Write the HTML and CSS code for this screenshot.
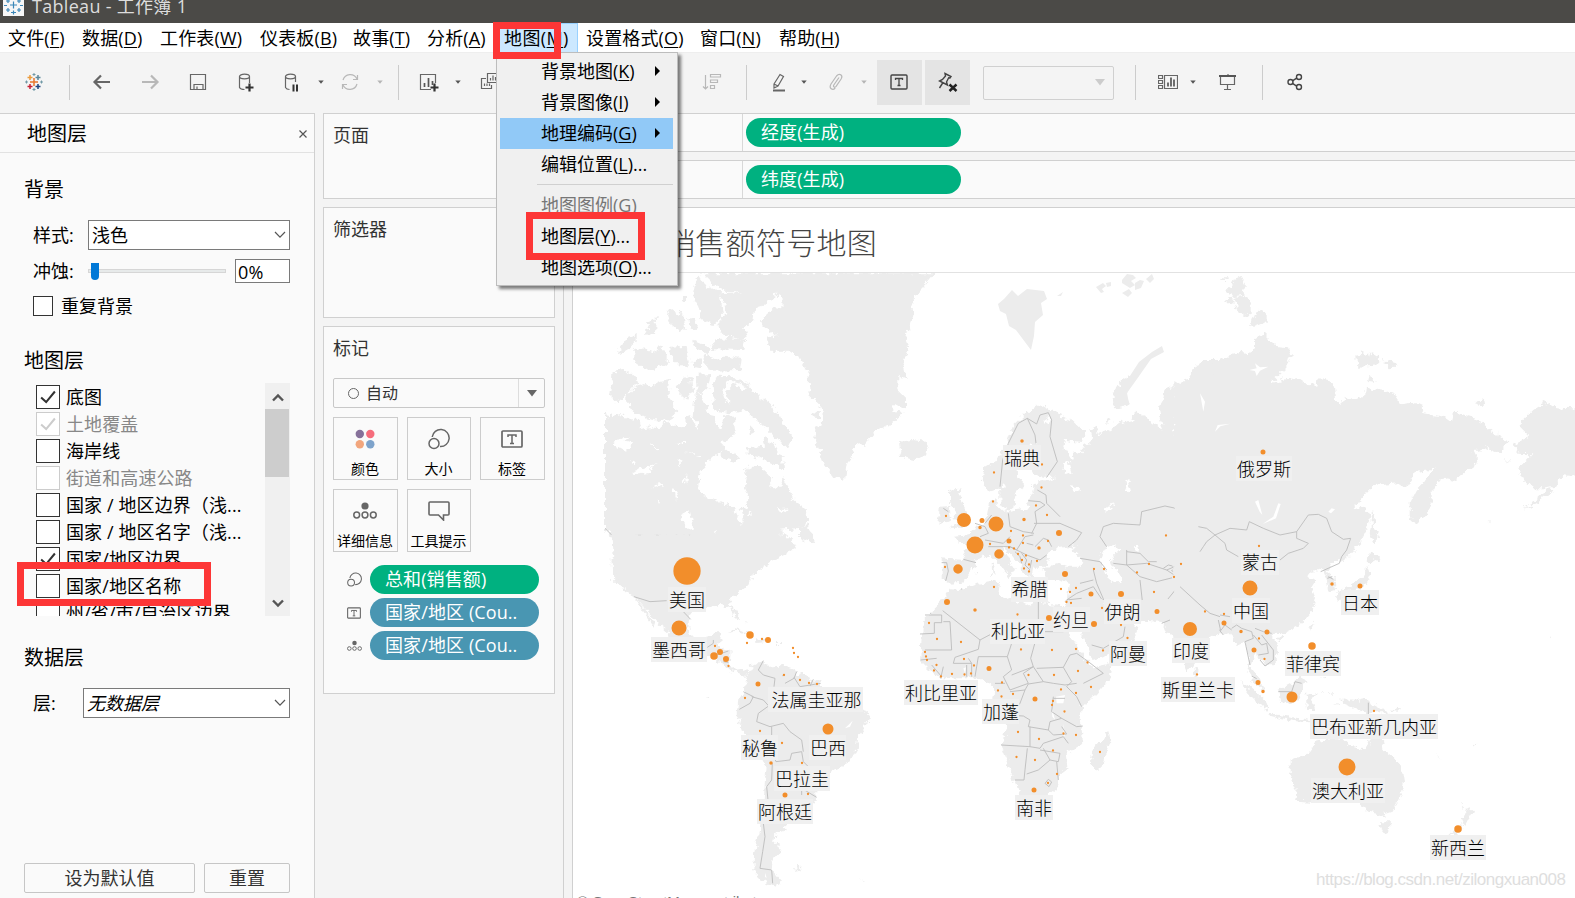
FILE: index.html
```html
<!DOCTYPE html>
<html lang="zh-CN">
<head>
<meta charset="utf-8">
<title>Tableau - 工作簿 1</title>
<link rel="stylesheet" href="styles.css">
</head>
<body>
<svg class="defs" width="0" height="0">
  <defs>
    <symbol id="caret" viewBox="0 0 6 4"><path d="M0.3 0.5h5.4L3 3.8z"/></symbol>
    <symbol id="chev" viewBox="0 0 12 8"><path d="M1 1l5 5.2L11 1" fill="none" stroke="#555" stroke-width="1.2"/></symbol>
    <symbol id="size" viewBox="0 0 22 22"><g fill="none" stroke="#666" stroke-width="1.5"><path d="M4.2 9A8.5 8.5 0 1 1 12 18.5"/><circle cx="6" cy="15.5" r="5"/></g></symbol>
    <symbol id="label" viewBox="0 0 22 18"><rect x="1" y="1" width="20" height="16" rx="1" fill="none" stroke="#666" stroke-width="1.7"/><path d="M7 7V5h8v2M11 5v8.5M9 13.5h4" fill="none" stroke="#666" stroke-width="1.5"/></symbol>
    <symbol id="detail" viewBox="0 0 24 18"><circle cx="12" cy="4" r="3.6" fill="#666"/><g fill="none" stroke="#666" stroke-width="1.5"><circle cx="3.7" cy="13" r="2.9"/><circle cx="12" cy="13" r="2.9"/><circle cx="20.3" cy="13" r="2.9"/></g></symbol>
    <symbol id="tick" viewBox="0 0 24 24"><path d="M4.5 12.5l5.5 5L19.5 6" fill="none" stroke-width="2.2"/></symbol>
    <filter id="coast" x="-2%" y="-2%" width="104%" height="104%" color-interpolation-filters="sRGB">
      <feTurbulence type="fractalNoise" baseFrequency=".055" numOctaves="3" seed="4" result="n"/>
      <feDisplacementMap in="SourceGraphic" in2="n" scale="26" xChannelSelector="R" yChannelSelector="G"/>
    </filter>
  </defs>
</svg>
<div class="app">
  <header class="titlebar">
    <svg class="app-icon" width="21" height="16" viewBox="0 0 21 16"><rect width="21" height="16" fill="#f7f7f7"/><path d="M7 5h7M10.5 1.5v7M3 1h4M5 0v3M14 1h4M16 0v3M3 10h4M5 8v4M14 10h4M16 8v4M8 12.5h5M10.5 10.5v4M1 5.500h3M17 5.500h3" stroke="#3b87b8" stroke-width="1.200"/></svg>
    <span>Tableau - 工作簿 1</span>
  </header>
  <nav class="menubar">
    <span>文件(<u>F</u>)</span><span>数据(<u>D</u>)</span><span>工作表(<u>W</u>)</span><span>仪表板(<u>B</u>)</span><span>故事(<u>T</u>)</span><span>分析(<u>A</u>)</span><span class="open">地图(<u>M</u>)</span><span>设置格式(<u>O</u>)</span><span>窗口(<u>N</u>)</span><span>帮助(<u>H</u>)</span>
  </nav>
  <div class="toolbar">
    <svg width="20" height="20" viewBox="0 0 20 20" stroke-width="1.5"><path d="M10 6v8M6 10h8" stroke="#e8762c"/><path d="M3.500 5.500h5M6 3v5" stroke="#eb9b3c"/><path d="M11.500 5.500h5M14 3v5" stroke="#5b879b"/><path d="M3.500 14.500h5M6 12v5" stroke="#c72035"/><path d="M11.500 14.500h5M14 12v5" stroke="#1f457e"/><path d="M8.500 2.500h3M10 1v3M8.500 17.500h3M10 16v3M1 10h3M2.500 8.500v3M16 10h3M17.500 8.500v3" stroke="#7099a6" stroke-width="1"/></svg>
    <i class="sep"></i>
    <svg width="20" height="20" viewBox="0 0 20 20"><path d="M18 10H3M9 3.500L2.500 10 9 16.500" class="ln b"/></svg>
    <svg width="20" height="20" viewBox="0 0 20 20"><path d="M2 10h15M11 3.500l6.500 6.500-6.500 6.500" class="ln b off"/></svg>
    <svg width="20" height="20" viewBox="0 0 20 20"><path d="M2.500 2.500h15v15h-15zM6 17.500v-5h9v5M9 17.500V14.500" class="ln"/></svg>
    <svg width="20" height="20" viewBox="0 0 20 20"><path d="M3.500 4.500v11q1 2 5 2M13.500 4.500V11" class="ln"/><ellipse cx="8.500" cy="4.500" rx="5" ry="2.300" class="ln"/><path d="M13.500 11.500v8M9.500 15.500h8" stroke="#333" stroke-width="2.200"/></svg>
    <svg width="20" height="20" viewBox="0 0 20 20"><path d="M3.500 4.500v11q1 2 4 2M13.500 4.500V10" class="ln"/><ellipse cx="8.500" cy="4.500" rx="5" ry="2.300" class="ln"/><path d="M11.500 12.500v7M15 12.500v7" stroke="#333" stroke-width="2"/></svg>
    <svg class="caret" width="6" height="4"><use href="#caret"/></svg>
    <svg width="20" height="20" viewBox="0 0 20 20"><path d="M3 8a7.500 7.500 0 0 1 14-1M17.500 3v4.500H13M17 12a7.500 7.500 0 0 1-14 1M2.500 17v-4.500H7" class="ln off"/></svg>
    <svg class="caret off" width="6" height="4"><use href="#caret"/></svg>
    <i class="sep"></i>
    <svg width="20" height="20" viewBox="0 0 20 20"><path d="M12 17.500H1.500v-15h15V11" class="ln"/><path d="M5.500 15v-4M9.500 15V6M13.500 13V9" stroke="#555" stroke-width="1.700"/><path d="M15.500 11.500v8M11.500 15.500h8" stroke="#333" stroke-width="2.200"/></svg>
    <svg class="caret" width="6" height="4"><use href="#caret"/></svg>
    <svg width="20" height="20" viewBox="0 0 20 20"><path d="M8.500 1.500h11v9h-11zM7 6.500H2.500v10h10V13M5.500 14v-2.500M8 14v-2.500M10.500 14v-2.500M11.500 8.500V6M14 8.500v-5M16.500 8.500V5" class="ln"/></svg>
    <svg width="20" height="20" viewBox="0 0 20 20"><path d="M3.500 3v14M1 14.500l2.500 2.500L6 14.500M8.500 2.500h10v2.500h-10zM8.500 8h7v2.500h-7zM8.500 13.500h4v3h-4z" class="ln off"/></svg>
    <i class="sep"></i>
    <svg width="20" height="20" viewBox="0 0 20 20"><path d="M5 12L11 2.500l3.500 2L9 14l-4 2zM5 12l4 2" class="ln"/><path d="M4 18.500h12" stroke="#666" stroke-width="2"/></svg>
    <svg class="caret" width="6" height="4"><use href="#caret"/></svg>
    <svg width="20" height="20" viewBox="0 0 20 20"><path d="M13 5.500L7.800 13q-.8 1.500.3 2t2-.6l5-7.400q1.700-2.800-.3-4.200T10.500 4L5 12q-1.800 3.200.2 4.800t4-.8" class="ln off"/></svg>
    <svg class="caret off" width="6" height="4"><use href="#caret"/></svg>
    <span class="tool-on"><svg class="t" width="18" height="16" viewBox="0 0 18 16"><rect x="1" y="1" width="16" height="14" rx="1" fill="none" stroke="#444" stroke-width="1.400"/><path d="M5.500 6V4.500h7V6M9 4.500v7M7.500 11.500h3" fill="none" stroke="#444" stroke-width="1.300"/></svg></span>
    <span class="tool-on"><svg width="20" height="20" viewBox="0 0 20 20"><path d="M7 1.500l6 3-1 1.500-1.300-.2L8.500 10l1 3-8-4 3-1.500L7.500 4zM5 10.500L1.500 16" class="ln dark"/><path d="M11.500 12.500l7 6.500M18.500 12.500L11.500 19" stroke="#222" stroke-width="2.400"/></svg></span>
    <span class="fit"><svg width="10" height="7" viewBox="0 0 10 7"><path d="M0 0h10L5 6.500z" fill="#ccc"/></svg></span>
    <i class="sep"></i>
    <svg width="20" height="20" viewBox="0 0 20 20"><path d="M.5 3.500h4v3h-4zM.5 8.500h4v3h-4zM.5 13.500h4v3h-4zM6.500 3.500h13v13h-13z" class="ln"/><path d="M10 14.500v-4M13 14.500v-9M16 14.500v-7" stroke="#555" stroke-width="1.700"/></svg>
    <svg class="caret" width="6" height="4"><use href="#caret"/></svg>
    <svg width="20" height="20" viewBox="0 0 20 20"><path d="M10 2v2M2.500 4v8.500h14V4M9.500 13v4.500M6 17.500h7" class="ln"/><path d="M1 4h17" stroke="#555" stroke-width="2"/></svg>
    <i class="sep"></i>
    <svg width="20" height="20" viewBox="0 0 20 20"><path d="M7.500 8.800l4.500-3M7.500 11.300l4.500 3" class="ln dark"/><g class="ln dark"><circle cx="5.500" cy="10" r="2.500"/><circle cx="14" cy="5" r="2.500"/><circle cx="14" cy="15" r="2.500"/></g></svg>
  </div>

  <main class="work">
    <aside class="side">
      <div class="side-head"><span>地图层</span><svg width="8" height="8" viewBox="0 0 8 8"><path d="M.5 .5l7 7M7.500 .5l-7 7" stroke="#555" stroke-width="1.200"/></svg></div>
      <h2 class="h-bg">背景</h2>
      <div class="row style-row"><label>样式:</label><div class="select">浅色<svg width="12" height="8"><use href="#chev"/></svg></div></div>
      <div class="row wash-row"><label>冲蚀:</label><div class="track"><i class="thumb"></i></div><div class="pct">0%</div></div>
      <div class="row repeat"><i class="box small"></i>重复背景</div>
      <h2 class="h-layers">地图层</h2>
      <div class="layers">
        <ul>
          <li><i class="box"><svg width="22" height="22"><use href="#tick"/></svg></i>底图</li>
          <li class="dim"><i class="box"><svg width="22" height="22"><use href="#tick"/></svg></i>土地覆盖</li>
          <li><i class="box"></i>海岸线</li>
          <li class="dim"><i class="box"></i>街道和高速公路</li>
          <li><i class="box"></i>国家 / 地区边界（浅...</li>
          <li><i class="box"></i>国家 / 地区名字（浅...</li>
          <li><i class="box"><svg width="22" height="22"><use href="#tick"/></svg></i>国家/地区边界</li>
          <li><i class="box"></i>国家/地区名称</li>
          <li><i class="box"></i>州/省/市/自治区边界</li>
        </ul>
        <div class="scroll"><svg width="12" height="9" viewBox="0 0 12 9"><path d="M1 7.500l5-5 5 5" class="arr"/></svg><i class="bar"></i><svg width="12" height="9" viewBox="0 0 12 9"><path d="M1 1.500l5 5 5-5" class="arr"/></svg></div>
      </div>
      <h2 class="h-data">数据层</h2>
      <div class="row data-row"><label>层:</label><div class="select"><em>无数据层</em><svg width="12" height="8"><use href="#chev"/></svg></div></div>
      <div class="buttons"><button>设为默认值</button><button>重置</button></div>
    </aside>

    <section class="cards">
      <div class="card pages">页面</div>
      <div class="card filters">筛选器</div>
      <div class="card marks">标记
        <div class="mark-type"><i class="ring"></i><span>自动</span><b><svg width="10" height="7" viewBox="0 0 10 7"><path d="M0 0h10L5 6.500z" fill="#666"/></svg></b></div>
        <div class="mark-grid">
          <div><svg width="20" height="20" viewBox="0 0 20 20"><circle cx="4.800" cy="5" r="4.200" fill="#86719a"/><circle cx="15.300" cy="5" r="4.200" fill="#f66d7c"/><circle cx="4.800" cy="15.200" r="4.200" fill="#f2a67d"/><circle cx="15.300" cy="15.200" r="4.200" fill="#7ea3cb"/></svg>颜色</div>
          <div><svg width="22" height="22"><use href="#size"/></svg>大小</div>
          <div><svg width="22" height="18"><use href="#label"/></svg>标签</div>
          <div><svg width="24" height="18"><use href="#detail"/></svg>详细信息</div>
          <div><svg width="22" height="20" viewBox="0 0 22 20"><path d="M2 1h18q1 0 1 1v11q0 1-1 1h-4.500v5l-5-5H2q-1 0-1-1V2q0-1 1-1z" fill="none" stroke="#666" stroke-width="1.600"/></svg>工具提示</div>
        </div>
        <div class="mark-pills">
          <svg width="15" height="15"><use href="#size"/></svg><span class="pill green">总和(销售额)</span>
          <svg width="14" height="12"><use href="#label"/></svg><span class="pill blue">国家/地区 (Cou..</span>
          <svg width="15" height="12"><use href="#detail"/></svg><span class="pill blue">国家/地区 (Cou..</span>
        </div>
      </div>
    </section>

    <section class="view">
      <div class="shelf"><span class="shelf-name"></span><span class="pill green">经度(生成)</span></div>
      <div class="shelf"><span class="shelf-name"></span><span class="pill green">纬度(生成)</span></div>
      <div class="sheet">
        <h1>销售额符号地图</h1>
        <svg class="map" width="1002" height="625" viewBox="573 273 1002 625">
          <!-- North America, Greenland, Arctic islands -->
          <g transform="translate(570 270) scale(.33333)">
            <g class="land" filter="url(#coast)">
              <path d="M105 420L112 440 120 425 128 442 150 432 175 445 200 450 215 465 208 478 240 472 270 475 290 455 315 470 345 468 348 440 360 435 380 480 385 460 368 440 372 385 390 372 405 400 415 430 432 440 440 470 455 478 460 440 475 432 495 445 498 485 480 510 458 515 458 540 430 560 405 585 388 610 385 650 405 678 440 690 470 705 490 712 495 740 513 762 520 740 512 715 530 710 538 680 525 655 530 625 525 600 545 590 570 592 590 610 600 620 605 650 620 658 630 645 640 625 655 650 670 690 700 715 717 740 717 755 700 765 680 778 630 782 610 800 600 820 625 800 650 792 640 815 650 830 680 830 650 850 625 858 600 875 580 890 560 900 530 940 130 940 128 870 135 830 128 800 105 780z"/>
              <path d="M570 155L588 135 610 115 637 118 638 85 615 72 645 30 670 10 1095 10 1060 50 1050 60 1025 90 1030 130 1020 180 1005 190 1015 240 1000 280 1010 330 985 320 985 360 1005 380 1005 415 970 405 970 422 998 430 960 465 920 480 885 520 850 530 845 560 830 580 822 632 790 620 765 585 750 545 735 510 740 470 755 465 758 430 740 390 720 390 715 310 705 290 690 260 650 245 600 245 603 230 580 205 625 195 600 185 575 168z"/>
              <path d="M388 10L670 10 600 90 590 105 555 115 550 150 525 180 530 200 510 208 480 195 450 190 445 160 455 140 430 165 395 150 385 110 368 80 375 40z"/>
              <path d="M425 215L480 200 525 210 520 240 430 238zM405 250L450 270 480 258 515 265 510 300 420 302 402 290zM290 120L310 118 342 140 345 175 330 185 305 165zM355 140L382 160 378 180 358 175zM225 155L258 145 255 190 225 195 240 165zM145 240L170 205 200 195 200 215 175 240 150 255zM190 240L215 235 255 250 265 222 290 255 290 280 235 302 190 270zM300 230L350 228 360 285 330 290 305 265zM370 212L400 225 423 235 415 250 375 235zM368 270L395 268 392 295 370 290zM128 305L165 300 208 330 170 375 145 398 120 375zM180 400L165 385 205 340 240 350 270 335 300 330 295 380 325 420 305 440 280 455 230 445 180 415zM317 350L340 320 362 315 368 360 355 392 330 370zM378 315L422 312 415 355 380 378zM425 350L440 320 495 322 540 345 545 362 600 400 640 455 668 500 650 538 620 505 570 460 520 420 480 430 430 420zM580 500L610 520 635 560 640 600 610 580 575 565 530 550 530 535 585 530zM535 470h18l5 18-22 5zM455 525L480 545 510 560 490 575 455 565zM725 425l25 5v15l-20-2zM340 78h8v18h-10zM985 515L1000 530 1020 515 1050 520 1062 510 1075 530 1060 555 1030 570 1000 560 988 545 1005 540zM690 770L715 762 715 780 743 815 730 822 690 808zM1105 750L1110 710 1140 708V745z"/>
            </g>
            <path class="water" filter="url(#coast)" d="M125 520L165 498 180 500 160 515 190 520 165 542zM240 515l20 25-5 3zM190 605L260 580 230 610 195 615zM180 570l15 8-8 4zM243 655l20-15 25 3-30 5zM310 655l15 10-10 25zM350 615l-5 25-12 3zM330 735L358 720 372 775 352 780zM323 518h30v4h-30zM335 546l55 10v3zM320 575h18l-10 10zM262 685l8 10-3 8zM405 825L440 805 490 825 485 842 460 835 440 885 450 900 460 845 480 840 475 875 487 885 530 860 500 860 490 840 440 815zM620 718l35-3-15 15zM535 725l10 3-10 7zM430 780l15 5-10 8zM228 885l10 5-5 6zM385 12L410 50 450 70 525 65 460 62 430 40 400 10zM450 75L460 140 470 135 455 75zM472 335L455 370 465 400 475 395 465 365 490 340 515 355 530 352 505 340z"/>
            <path class="border" d="M105 775l25 25 12 5V796H380L405 805 435 808 470 825 487 845 490 880 520 862 560 845 590 843 602 815 612 820 620 848"/>
          </g>
          <!-- United States to South America -->
          <g transform="translate(570 540) scale(.33333)">
            <g class="land" filter="url(#coast)">
              <path d="M128-20L640-20 680 18 630 48 600 65 570 90 545 100 535 135 510 155 485 175 480 190 500 215 508 240 495 235 485 205 455 195 420 200 400 212 375 205 360 225 358 270 372 300 400 305 415 285 450 278 452 300 440 320 482 335 478 375 500 392 530 388 532 405 505 400 478 393 455 370 430 350 400 345 370 335 320 315 295 290 290 275 265 255 235 215 192 170 165 150 150 125 132 95z"/>
              <path d="M192 172L222 205 256 258 256 266 240 245 210 200zM470 275L500 265 540 282 528 282 500 272zM555 295l28 2 15 8-42 4zM525 245l8 5-4 3zM618 306h15v3h-15z"/>
              <path d="M530 405L545 380 580 362 582 378 600 380 640 375 670 385 690 400 725 420 745 422 755 440 762 470 800 488 860 505 893 515 896 530 890 550 865 590 860 630 840 665 790 690 765 720 740 745 738 775 715 795 690 830 660 845 640 860 648 870 620 880 615 910 632 925 625 945 608 965 605 990 635 1025 610 1042 575 1020 550 990 552 940 560 900 570 860 580 800 585 720 590 680 560 640 530 600 500 520 505 480 525 450zM675 982l20-2-5 10-12 2zM870 1018l15 10-8-2zM412 465l6 8-5 2z"/>
            </g>
            <path class="water" d="M825 565L848 542 840 560zM585 998l5 15-5-2zM600 990l-5 10z"/>
            <path class="border" d="M192 170L240 185 290 182M340 215L362 238M412 322l18-12V300M440 345l35-12M460 365l15 2M580 362L565 390 580 405 615 415 612 440M680 395L672 415 645 430M672 412L690 440 752 430M520 455L550 470 540 490 508 508M545 470L580 480 598 500 602 455M600 495L565 520 560 545 600 560 640 550 660 575 695 600 700 635M605 560L605 635 618 665 660 660 665 640 695 635 700 665 725 690M607 670L605 720 590 740 595 790M580 850L585 890 578 935 570 985 605 990 608 1030M695 765V745L740 772M730 418l-10 20M645 405l-8 2"/>
          </g>
          <!-- Svalbard, Franz Josef Land, Novaya Zemlya -->
          <g transform="scale(.33333)"><path class="land" transform="scale(3)" filter="url(#coast-far)" d="M998 304l6-5 8-9 6 6 9-7 17 2 3 8-6 4 2 12-8 7-1 14-3 14-6-8-9-12-7-4-3-12-6-3zM1096 287l7-4 3 3-4 3 2 3-3 1zM1106 283l5-1v4l-4 1zM1122 280l5-6 6 1 3 3-5 3 4 4-5 3-8-5zM1135 283l5-3 4 1-3 7-6 2zM1146 279l6-5 2 5-4 4zM1122 293l7-4 3 4-4 4zM1162 346l-10 6-13 10-11 17-12 14 4 9 9 1-2-10 10-14 14-20 13-7zM1127 404l-4-10-8 2 3 11zM1057 296l6-4-2 4z"/></g>
          <!-- Europe and western Asia -->
          <g transform="translate(900 380) scale(.33333)">
            <g class="land" filter="url(#coast)">
              <path d="M245 300L250 265 290 240 320 190 340 135 375 100 425 72 470 100 520 125 555 160 545 187 495 180 490 200 515 240 525 215 545 220 550 195 578 185 568 150 590 137 600 165 640 145 660 130 700 120 705 90 760 130 790 152 775 100 795 30 820 20 830 70 825 130 820 180 835 150 862 140 840 110 838 60 860 0 900-60 1030-60 1030 760 800 760 785 722 730 722 700 705 660 700 630 680 608 672 620 700 650 730 690 718 710 745 700 770 560 770 535 740 500 680 510 610 480 600 445 600 425 570 440 560 400 560 395 592 375 585 355 550 330 520 310 505 330 545 345 568 325 598 315 575 290 540 270 525 250 530 225 545 215 575 190 605 150 608 128 600 128 535 190 540 200 500 162 470 205 465 215 450 250 430 260 410 268 365 290 350 290 375 310 395 385 385 385 350 400 335 405 310 440 300 465 290 435 290 400 285 383 250 400 210 415 190 395 190 385 215 350 250 355 290 370 310 345 350 340 380 318 395 302 370 300 325 265 335z"/>
              <path d="M150 330L185 325 178 350 195 385 212 425 205 440 150 440 175 430 160 415 170 395 150 370zM115 428L120 398 150 392 152 410 145 425zM0 185L40 180 72 185 87 205 70 225 40 240 5 225zM645 85L640 40 665 0 688-10 678 45 690 70 672 82zM225 575l8 2-5 5zM275 550l8 5 2 28-8 2zM615 118l10-5 10 8-15 8zM125 75l10-8z"/>
            </g>
            <path class="water" filter="url(#coast)" d="M440 560L445 520 470 505 500 500 520 515 550 545 545 560 500 560 470 550zM600 540L605 510 640 495 660 505 640 530 630 560 655 570 665 605 640 608 620 590zM490 510l35-18-10 20zM515 315l10 3 12 14-12 5zM675 305l10-5 8 35-8 2zM615 400l5-25 30-5-20 10zM945 155l10-15 35-5-30 10zM830 510l30-15 20 5-40 8zM430 120l15-12 5 15-12 10zM310 310l15 5-12 10zM490 255l15-10 10 35-15 5zM700 505l20-2-10 12z"/>
            <path class="border" d="M300 320L308 240 325 190 355 130 382 115 410 132 420 105 445 98 455 120 450 170 472 245 440 292M382 115L405 165 408 190M412 330L438 345 440 370 480 410M385 362L420 365 435 375 405 395M405 395L410 430 395 460M402 430L480 430 545 458 530 480 505 500M325 400L330 440 370 455 402 460M225 430L255 440 265 460 240 470M255 430l20-25M255 480L310 490 330 470M265 500L330 500 350 510 375 470 400 465M330 500L380 525 420 540 440 525M345 515l15 15 5 20M365 520l15 20-5 15 15 15M395 540l-5 25M405 500l25-25 15 5 10 20M380 490l20 5M125 548h15l5 25-8 30M190 538l38 10M600 470L610 440 640 430 720 435 725 395 795 378 850 390 865 425 920 440 945 462 930 480 880 500 860 545 800 570 830 590 850 610 830 625 880 665M600 470L620 500M945 462L1000 442 1025 455M680 510L680 555 740 550 800 570M680 515L720 520 745 545 770 545M640 550L680 555 720 590 770 605 830 590M720 600L730 690 785 680 830 625M540 535L600 545 620 570M580 570L590 610 620 680M540 610L580 600M500 660L530 640 580 620 600 650 620 680M545 655L500 660M130 700h-40M185 625L190 655 130 710M270 610L290 660 285 740M415 670V720M870 660L900 675 970 700M130 385l15 10M790 565l15-10 20 5-10 12 15 8"/>
          </g>
          <!-- Africa, Arabia, India -->
          <g transform="translate(900 580) scale(.33333)">
            <g class="land" filter="url(#coast)">
              <path d="M125 65L150 28 185 30 230 12 280 5 300 10 295 45 340 60 380 75 410 60 440 72 495 75 500 100 490 120 510 165 530 195 555 235 580 262 635 250 630 290 590 340 540 390 545 450 550 490 500 520 505 560 480 580 475 620 430 655 360 650 340 600 325 550 303 495 320 450 300 400 275 370 280 330 270 310 245 295 200 295 125 295 90 270 60 240 65 180 70 120 95 95z"/>
              <path d="M500 80L505 110 535 150 560 185 575 240 630 222 700 180 715 145 680 120 650 130 620 100 605 75 640 80 660 100 730 122 785 125 820 170 835 200 850 250 862 277 882 250 890 215 940 165 985 140 1050 145V60H500zM880 265l10-5 12 20-8 15-10-3zM625 450L632 480 605 560 590 573 572 550 580 500 610 480zM675 530l5-2zM60 95l10 2z"/>
            </g>
            <path class="water" d="M468 350L495 345 490 370 470 370zM455 380l10 40-8-10zM490 430l5 35-4 5zM190 265l8-3-3 18z"/>
            <path class="border" d="M75 105h50V128H103V160L60 162M128 92L240 180 325 135M150 125L155 210H75M130 125h20M62 240L110 235M240 180L235 208 165 232 160 250 215 250 205 235M335 150V190L322 230 235 230 225 290M322 230L335 270 310 290 330 330 385 310 370 280 400 260 392 235 410 170M325 190L330 140M415 65V155H490M335 285L400 260 430 305 460 310 495 315 530 310M410 265L490 262 510 225 530 220 565 245 610 280 550 310M490 262L515 305 500 320 530 350 545 380M330 335L375 330 385 312 430 305M375 330L360 370 340 390 315 405 370 408 390 420 385 440 445 450 450 425 485 415 455 395 460 350M495 355H460M485 415L530 440 548 438M445 450L460 465 500 462 485 440M303 495L390 500 420 505 430 490 490 470 505 490M390 440V500M382 505L375 570 372 600 345 600M430 505L450 540 415 570 380 582M420 510L480 520 475 545 450 540M470 545L475 600M435 610l10-12 10 8-8 14zM95 255l30 35M130 260l-8 35M200 290V255M215 290V250M285 310h30M500 120l20-5M575 195L610 205 670 170 675 140M785 130L810 120M950 140L970 165M965 100L990 110 985 130M885 75L960 105 950 110 890 90z"/>
          </g>
          <!-- Siberia and Alaska -->
          <g transform="translate(1200 270) scale(.33333)">
            <g class="land" filter="url(#coast)">
              <path d="M-80 340L-10 325 40 320 35 290 90 255 125 245 140 250 165 235 165 205 190 190 215 215 225 225 262 228 272 260 262 290 210 340 255 328 290 325 320 345 355 347 358 325 385 330 405 350 408 390 422 408 432 380 460 392 492 380 495 350 550 360 580 372 600 403 640 398 668 410 670 430 730 440 752 455 760 425 830 445 865 475 890 495 925 515 900 550 850 530 838 545 820 545 835 575 800 600 765 630 740 625 715 630 695 665 695 705 670 740 642 768 632 740 632 695 650 660 670 640 705 590 695 600 650 605 620 650 590 640 520 648 460 715 490 710 510 740 500 780 480 820 440 865 420 870 395 885 380 905 400 920 405 960 385 965 380 925 370 900 340 905 310 918 350 930 325 970 345 1010H-80z"/>
              <path d="M1150 420L1070 415 1040 395 1000 420 955 465 990 500 940 525 955 548 1000 550 955 595 965 625 1000 655 1040 655 1060 650 1090 615 1150 622zM1050 655L1060 665 1010 700 965 720 1000 695zM825 400l18-12 17 8-15 10zM85 60L105 25 120 18 135 45 130 75 95 80zM100 85L130 78 155 90 155 135 135 138 112 120zM78 88l15-5 8 12-8 5zM150 175L165 130 178 113 200 140 200 155zM472 260L485 245 500 260 515 250 540 265 520 288 475 290zM550 270l36 10v10l-20 2zM500 330l15-12 12 20-25-2zM68 25h15v5h-12zM515 725L525 740 522 765 537 800 520 820 510 800 515 765zM510 850L540 862 510 880 500 875zM500 885L515 905 500 940 480 955 450 960 440 985 415 990 415 970 450 950 480 930 500 905zM645 690l-3 10zM628 778l8-6zM910 568l22 4-8 4zM560 845l14-4zM720 708l5 5zM865 757h6l2 3z"/>
            </g>
            <path class="water" d="M148 300l22-5-5-15 15 12 25-2-25 12-10 16-5-15zM45 485l8-20 38-4-30 8zM165 695l10-5 12 45-8-10zM188 762L220 740 235 700 242 702 228 745zM0 370l15 25-5 30zM385 725l10-10 10 3-12 12zM508 750L500 790 480 830 470 870 500 870 510 820z"/>
            <path class="border" d="M-5 770L20 775 45 795 90 775 140 780 148 755 190 775 240 795 290 785 325 735 355 733 380 745 395 785 430 808 452 805 440 840 425 860 418 880 362 905M45 795L75 820 80 840 115 860M290 785L290 805 325 820 310 835 265 850 240 870M45 795L20 815 10 830 0 845M382 925l15-5"/>
          </g>
          <!-- South-east Asia and Oceania -->
          <g transform="translate(1200 570) scale(.33333)">
            <g class="land" filter="url(#coast)">
              <path d="M-80-20L330-20 322 20 345 80 335 125 300 165 250 190 232 185 215 195 235 240 230 270 205 290 185 268 165 250 152 290 182 330 190 365 170 345 143 300 150 270 135 215 110 225 90 190 60 180 40 195 0 215-80 215zM118 330L150 350 200 395 210 420 190 415 150 375zM205 430L270 440 330 450V460L250 448 210 438zM235 360L275 340 300 320 320 330 305 350 300 385 280 402 240 395zM320 375L345 370 370 365 335 380 345 420 325 420zM425 385L460 395 490 388 530 405 570 430H500L450 408 425 398zM570 425l35-15-15 18zM328 175l10-20 5 5-10 22zM230 205l15-5 5 8-12 10zM360 320l15-2v8zM390 370l8-5v12zM395 402l25 2v5zM620 432l15 12zM412 70L440 60V80L420 95z"/>
              <path d="M272 570L325 550 350 515 385 505 430 510 450 528 500 535 515 500H545L550 540 585 565 605 590 612 635 600 680 575 725 545 735 505 725 470 695 420 685 370 680 330 695 285 692 290 660 272 610zM538 757L570 757 565 785 552 792zM780 697L795 715 825 725 810 750 795 765 785 745 800 730zM748 795L785 760 790 770 765 800zM705 550l22 20-18-14zM815 530l20-12-10 14zM1042 203h10v5zM540 260l8-15z"/>
            </g>
            <path class="border" d="M-60 50L0 105 30 130 60 140M55 150L62 182 75 165 95 180M60 135l30 5M95 175L110 165 125 175 155 185 160 205 135 215 150 285M165 175L190 185 215 190M160 195L185 225 200 220 205 250 175 255M185 195L220 240 220 270 195 288 180 270M235 365L275 365 285 335 305 340M505 398V432M155 318l15 8M385 20l15 8"/>
          </g>
          <!-- Marks: zero-length round strokes, one path per size -->
          <g class="dots">
            <path stroke-width="27.300" d="M687 571h0"/>
            <path stroke-width="17" d="M975 545h0M1347 767h0"/>
            <path stroke-width="15" d="M679 628h0M996 524h0M1250 588h0"/>
            <path stroke-width="14" d="M964 520h0M1190 629h0"/>
            <path stroke-width="11" d="M828 729h0M1292 697h0"/>
            <path stroke-width="9.5" d="M999 554h0M958 569h0"/>
            <path stroke-width="7.500" d="M750 635h0M714 656h0M1312 646h0M1458 829h0"/>
            <path stroke-width="6" d="M768 640h0M726 659h0M720 652h0M947 602h0M1049 618h0M1094 624h0M1121 594h0M1065 574h0M1059 533h0"/>
            <path stroke-width="5" d="M758 684h0M785 795h0M989 668.500h0M1035 699h0M1034 790h0M1091 594h0M1157 611.500h0M1263 452h0M1360 586h0M1267 632h0M1254 650h0M1258 682.500h0M1224 623h0M1009 541h0M982 520.500h0"/>
            <path stroke-width="3.500" d="M771 763h0M1022 441h0M1024 519.500h0M980 527.500h0M1039 548h0M975 610h0M1332 584h0M1263 691.500h0M1241 631.500h0"/>
            <path stroke-width="2.300" d="M715 646h0M747 643h0M762 639h0M728.500 666h0M793 648h0M794 653h0M798 657h0M784 675h0M800 680h0M809 683h0M817 684h0M745 698h0M760 731h0M782 743h0M802 763h0M808 794h0M994 472.500h0M1042 464.500h0M1041.500 487.500h0M993 501.500h0M1036 505.500h0M1047 515h0M946 516h0M1011 531h0M1023 535.500h0M1023 543h0M990 544h0M1048 541h0M1009 547.500h0M1014 548.500h0M1018 554h0M1026 555.500h0M1022 560h0M1029 564.500h0M1037 561h0M1024 568.500h0M1029 571.500h0M945 567h0M994 587h0M1061 589h0M1076 588h0M1070 592h0M1066.500 602h0M1071 603h0M1094 569h0M1104 569h0M1166 535.500h0M1149 564h0M1181 564h0M1137 572.500h0M1174 577h0M1154 592h0M1102 608h0M1113 620h0M1121 625h0M1127.500 638h0M1103 650.500h0M1205 611.500h0M1224 614h0M1259 546h0M1017.500 614.500h0M929 623h0M937 639h0M961 642h0M925 652h0M926 656.500h0M927 660h0M936.500 665h0M934 670.500h0M941 676.500h0M952 674h0M964 659h0M964.500 674.500h0M971 673.500h0M974 665.500h0M1021 649.500h0M1052 650h0M1076 649h0M1087.500 662.500h0M1078 671h0M1028.500 675h0M1054 675h0M1002 682.500h0M998 690.500h0M1001.500 696.500h0M1013 694h0M1061 689.500h0M1076 693h0M1091 687h0M1053 701h0M1052 705h0M1064.500 711.500h0M1018 732h0M1039 739h0M1063.500 733.500h0M1076 735h0M1053 750.500h0M1016.500 757h0M1035 760h0M1100 752h0M1057 774h0M1048 783h0M1197 674.500h0M1259 638.500h0M1264.500 659h0M1374 711h0"/>
          </g>
          <g class="tags">
            <rect x="668" y="587" width="38"/><text x="687" y="607">美国</text>
            <rect x="651" y="637" width="56"/><text x="679" y="657">墨西哥</text>
            <rect x="768" y="687" width="95"/><text x="816.500" y="707">法属圭亚那</text>
            <rect x="741" y="735" width="37"/><text x="760" y="755">秘鲁</text>
            <rect x="809" y="735" width="37"/><text x="828" y="755">巴西</text>
            <rect x="774" y="766" width="56"/><text x="802" y="786">巴拉圭</text>
            <rect x="757" y="799" width="56"/><text x="785" y="819">阿根廷</text>
            <rect x="1003" y="445" width="38"/><text x="1022" y="465">瑞典</text>
            <rect x="1011" y="577" width="37"/><text x="1029.500" y="596">希腊</text>
            <rect x="990" y="619" width="55"/><text x="1018" y="638">利比亚</text>
            <rect x="1053" y="607" width="37"/><text x="1071" y="627">约旦</text>
            <rect x="1104" y="599" width="37"/><text x="1122.500" y="619">伊朗</text>
            <rect x="1109" y="641" width="38"/><text x="1128" y="661">阿曼</text>
            <rect x="1172" y="638" width="38"/><text x="1191" y="658">印度</text>
            <rect x="1161" y="677" width="74"/><text x="1198" y="697">斯里兰卡</text>
            <rect x="904" y="680" width="74"/><text x="941" y="700">利比里亚</text>
            <rect x="982" y="699" width="37"/><text x="1001" y="719">加蓬</text>
            <rect x="1015" y="795" width="38"/><text x="1034" y="815">南非</text>
            <rect x="1236" y="456" width="56"/><text x="1264" y="476">俄罗斯</text>
            <rect x="1241" y="550" width="38"/><text x="1260" y="569">蒙古</text>
            <rect x="1232" y="598" width="38"/><text x="1251" y="618">中国</text>
            <rect x="1341" y="590" width="38"/><text x="1360" y="610">日本</text>
            <rect x="1285" y="651" width="56"/><text x="1313" y="671">菲律宾</text>
            <rect x="1310" y="714" width="128"/><text x="1374" y="734">巴布亚新几内亚</text>
            <rect x="1311" y="778" width="74"/><text x="1348" y="798">澳大利亚</text>
            <rect x="1430" y="835" width="56"/><text x="1458" y="855">新西兰</text>
          </g>
          <text class="credit" x="577" y="907" textLength="200">© OpenStreetMap contributors</text>
          <text class="mark" x="1316" y="885" textLength="250">https://blog.csdn.net/zilongxuan008</text>
        </svg>
      </div>
    </section>
  </main>

  <div class="popup">
    <div class="more">背景地图(<u>K</u>)</div>
    <div class="more">背景图像(<u>I</u>)</div>
    <div class="more hot">地理编码(<u>G</u>)</div>
    <div>编辑位置(<u>L</u>)...</div>
    <hr>
    <div class="dim">地图图例(<u>G</u>)</div>
    <div>地图层(<u>Y</u>)...</div>
    <div>地图选项(<u>O</u>)...</div>
  </div>
  <div class="frame frame-menu"></div>
  <div class="frame frame-item"></div>
  <div class="frame frame-layer"></div>
</div>
</body>
</html>
```

FILE: styles.css
```css
* { box-sizing: border-box; }
body { margin: 0; font: 18px/24px "Open Sans", "Noto Sans CJK SC", sans-serif; color: #000; }
.defs { position: absolute; }
.app { position: relative; width: 1575px; height: 898px; overflow: hidden; background: #f4f4f4; display: flex; flex-direction: column; }
ul, h1, h2 { margin: 0; padding: 0; font-weight: 400; list-style: none; }
u { text-underline-offset: 2px; text-decoration-thickness: 1px; }

.titlebar { height: 23px; flex: none; background: #4b4a47; color: #ddd; display: flex; gap: 8px; padding-left: 3px; overflow: hidden; }
.titlebar span { line-height: 24px; margin-top: -6px; white-space: nowrap; letter-spacing: .3px; }

.menubar { height: 29px; flex: none; background: #fff; padding-left: 8px; display: grid; grid-template-columns: 74px 78px 100px 93px 74px 69px 90px 114px 79px 80px; line-height: 30px; white-space: nowrap; letter-spacing: .15px; }
.menubar .open { background: #cce8ff; border: 1px solid #99d1ff; width: 82px; padding-left: 7px; line-height: 28px; letter-spacing: .4px; }

.toolbar { height: 61px; flex: none; padding-left: 24px; padding-bottom: 2px; display: grid; align-items: center; border-top: 1px solid #eee;
  grid-template-columns: 45px 23px 48px 48px 48px 46px 36px 22px 37px 21px 21px 36px 24px 223px 44px 23px 32px 25px 35px 16px 48px 58px 152px 23px 32px 28px 44px 23px 20px; }
.sep { width: 1px; height: 35px; background: #ccc; margin-top: 1px; }
.ln { fill: none; stroke: #666; stroke-width: 1.2; }
.ln.b { stroke-width: 2.2; }
.ln.off { stroke: #b8b8b8; }
.ln.dark { stroke: #444; stroke-width: 1.4; }
.caret { fill: #555; }
.caret.off { fill: #b5b5b5; }
.tool-on { width: 45px; height: 45px; background: #e4e4e4; display: grid; place-items: center; }
.tool-on .t { margin-right: 2px; }
.fit { width: 131px; height: 34px; border: 1px solid #d0d0d0; border-radius: 2px; display: flex; align-items: center; justify-content: flex-end; padding-right: 8px; margin-top: 1px; }

.work { flex: 1; min-height: 0; display: grid; grid-template-columns: 315px 249px 1fr; }
.side { background: #fafafa; border: 1px solid #d0d0d0; border-width: 1px 1px 0 0; display: flex; flex-direction: column; height: 785px; }
.side-head { height: 39px; flex: none; border-bottom: 1px solid #e2e2e2; display: flex; align-items: center; justify-content: space-between; padding: 1px 7px 0 27px; font-size: 20px; }
h2 { font-size: 20px; line-height: 28px; padding-left: 24px; flex: none; }
.h-bg { margin-top: 23px; }
.row { display: flex; align-items: center; padding-left: 33px; flex: none; }
.row label { width: 55px; }
.select { height: 30px; width: 202px; border: 1px solid #7a7a7a; background: #fff; padding: 0 3px; display: flex; align-items: center; justify-content: space-between; }
.style-row { margin-top: 16px; }
.wash-row { margin-top: 9px; height: 24px; }
.track { width: 138px; height: 4px; border: 1px solid #d6d6d6; background: #e7eaea; display: flex; align-items: center; padding-left: 2px; margin-right: 9px; }
.thumb { width: 8px; height: 17px; flex: none; background: #0078d7; border-radius: 0 0 4px 4px; }
.pct { width: 55px; height: 24px; border: 1px solid #7a7a7a; background: #fff; padding-left: 2px; line-height: 24px; letter-spacing: .3px; }
.repeat { margin-top: 11px; height: 24px; gap: 8px; }
.box { width: 24px; height: 24px; border: 1px solid #333; background: #fff; flex: none; stroke: #333; display: block; }
.box.small { width: 20px; height: 20px; }
.h-layers { margin-top: 29px; margin-bottom: 8px; line-height: 28px; height: 28px; }
.layers { height: 233px; flex: none; overflow: hidden; display: flex; justify-content: space-between; padding: 0 24px 0 36px; }
.layers li { height: 27px; display: flex; align-items: center; gap: 6px; white-space: nowrap; letter-spacing: .1px; }
.layers .dim { color: #888; }
.dim .box { border-color: #ccc; stroke: #ccc; }
.scroll { width: 25px; background: #f0f0f0; display: flex; flex-direction: column; align-items: center; padding: 10px 0 8px; }
.scroll .bar { width: 24px; height: 68px; background: #cdcdcd; margin: 7px 1px auto 0; }
.arr { fill: none; stroke: #555; stroke-width: 2.4; }
.h-data { margin-top: 28px; }
.data-row { margin-top: 16px; }
.data-row label { width: 50px; }
.data-row .select { width: 207px; }
.buttons { margin-top: auto; margin-bottom: 5px; padding-left: 24px; display: flex; gap: 9px; }
button { height: 30px; width: 171px; border: 1px solid #c6c6c6; border-radius: 2px; background: #fafafa; color: #333; font: inherit; padding: 0; }
button + button { width: 86px; }

.cards { padding-left: 8px; padding-right: 8px; border-right: 1px solid #d0d0d0; display: flex; flex-direction: column; gap: 8px; }
.card { background: #fafafa; border: 1px solid #d0d0d0; padding: 9px 9px; color: #333; }
.pages { height: 86px; }
.filters { height: 111px; }
.marks { height: 368px; }
.mark-type { height: 30px; margin-top: 18px; border: 1px solid #c8c8c8; border-radius: 2px; display: flex; align-items: center; font-size: 16px; padding-left: 14px; }
.ring { width: 11px; height: 11px; border: 1.5px solid #666; border-radius: 50%; margin-right: 7px; }
.mark-type b { margin-left: auto; width: 26px; height: 28px; border-left: 1px solid #ddd; display: grid; place-items: center; }
.mark-grid { display: grid; grid-template-columns: 65px 64px 65px; gap: 9px; margin-top: 9px; }
.mark-grid div { height: 63px; border: 1px solid #ccc; font-size: 14px; line-height: 20px; color: #000; display: grid; grid-template-rows: 41px 20px; place-items: center; white-space: nowrap; padding-right: 1px; }
.mark-pills { display: grid; grid-template-columns: 22px 169px; column-gap: 5px; row-gap: 4px; align-items: center; margin: 13px 0 0 10px; justify-items: center; }
.pill { height: 29px; border-radius: 15px; color: #fff; padding-left: 15px; line-height: 28px; width: 169px; white-space: nowrap; letter-spacing: .1px; }
.green { background: #00b180; }
.blue { background: #4996b2; }

.view { display: flex; flex-direction: column; gap: 8px; }
.shelf { height: 39px; background: #fafafa; border: 1px solid #d0d0d0; border-width: 1px 0; margin-left: 8px; display: flex; align-items: center; }
.shelf-name { width: 171px; height: 37px; border-right: 1px solid #d8d8d8; margin-right: 3px; }
.shelf .pill { width: 215px; padding-left: 15px; }
.sheet { flex: 1; margin-left: 8px; background: #fff; border: 1px solid #d0d0d0; border-width: 1px 0 0 1px; height: 691px; overflow: hidden; }
.sheet h1 { height: 65px; border-bottom: 1px solid #e2e2e2; padding-left: 92px; font: 300 30px/67px "Noto Sans CJK SC", sans-serif; letter-spacing: .3px; color: #444; }
.map { display: block; }
.land { fill: #ececec; }
.water { fill: #fff; }
.border { fill: none; stroke: #bcbcbc; stroke-width: 2.7; stroke-linejoin: round; }
.dots { fill: none; stroke: #f28e2b; stroke-linecap: round; }
.tags rect { height: 25px; fill: #f0f0f0; }
.tags text { font: 300 18px "Noto Sans CJK SC", sans-serif; fill: #000; text-anchor: middle; }
.credit { font: 15px "Liberation Sans", sans-serif; fill: #777; }
.mark { font: 17px "Liberation Sans", sans-serif; fill: #dedede; }

.popup { position: absolute; left: 496px; top: 52px; width: 182px; height: 234px; background: #f0f0f0; border: 1px solid #bdbdbd; box-shadow: 3px 3px 3px rgba(0,0,0,.5); padding: 3px 4px 0 3px; }
.popup div { height: 31px; line-height: 31px; padding-left: 41px; white-space: nowrap; position: relative; }
.popup .hot { background: #91c9f7; }
.popup .dim { color: #777; }
.popup .more::after { content: ""; position: absolute; right: 13px; top: 10px; border: 5px solid transparent; border-left-color: #000; border-right: 0; }
.popup hr { margin: 4px 0 5px 37px; border: 0; border-top: 1px solid #d0d0d0; }
.frame { position: absolute; border: 7px solid #fd3636; }
.frame-menu { left: 493px; top: 22px; width: 68px; height: 37px; }
.frame-item { left: 526px; top: 212px; width: 119px; height: 48px; }
.frame-layer { left: 17px; top: 562px; width: 194px; height: 44px; }
```
